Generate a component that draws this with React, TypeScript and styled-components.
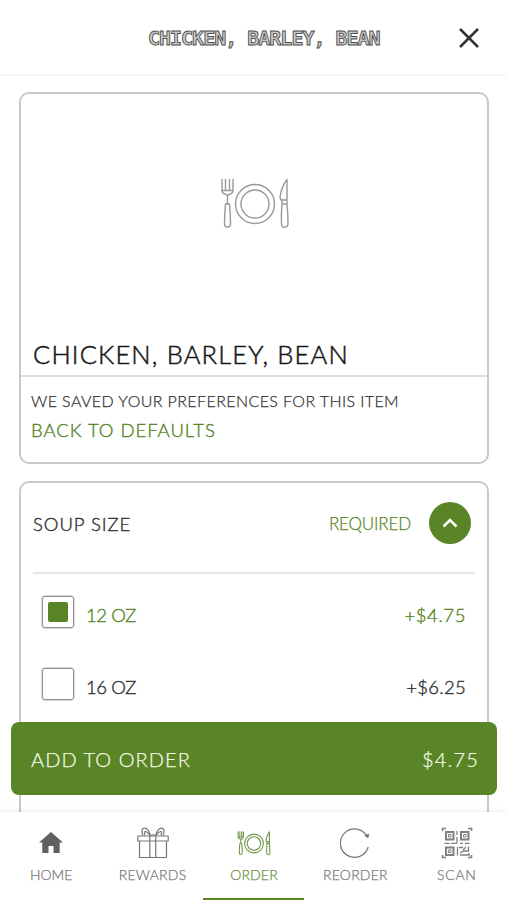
import React from 'react';
import styled, { createGlobalStyle } from 'styled-components';

const green = '#598527';

const GlobalStyle = createGlobalStyle`
  * { box-sizing: border-box; }
  body { margin: 0; background: #fff; }
`;

const Screen = styled.div`
  position: relative;
  display: flex;
  flex-direction: column;
  width: 507px;
  height: 900px;
  overflow: hidden;
  background: #fff;
  font-family: Lato, "Open Sans", sans-serif;
  font-weight: 300;
`;

const Header = styled.header`
  display: grid;
  grid-template-columns: 1fr 76px;
  align-items: center;
  flex: none;
  height: 76px;
  border-bottom: 2px solid #f5f5f5;
`;

const HeaderTitle = styled.h1`
  margin: 1px 0 0 148px;
  font: bold 20px/24px "DejaVu Sans Mono", monospace;
  letter-spacing: -1.01px;
  white-space: nowrap;
  color: #c8c8c8;
  -webkit-text-stroke: 0.9px #505050;
`;

const CloseButton = styled.button`
  display: flex;
  justify-content: center;
  padding: 1px 0 0;
  border: 0;
  background: none;
`;

const Content = styled.main`
  display: flex;
  flex-direction: column;
  gap: 17px;
  flex: 1;
  min-height: 0;
  overflow: hidden;
  padding: 16px 18px 0 19px;
`;

const Card = styled.section<{ $height: number }>`
  flex: none;
  height: ${(p) => p.$height}px;
  border: 2px solid #c9c9c9;
  border-radius: 10px;
`;

const Text = styled.span<{ $size: number; $spacing?: number; $color?: string; $weight?: number }>`
  font-size: ${(p) => p.$size}px;
  line-height: 1.2;
  letter-spacing: ${(p) => p.$spacing ?? 0}px;
  color: ${(p) => p.$color ?? '#333'};
  -webkit-text-stroke: ${(p) => p.$weight ?? 0.25}px currentColor;
  white-space: nowrap;
`;

const Photo = styled.div`
  display: flex;
  justify-content: center;
  height: 243px;
  padding: 84px 0 0 1px;
`;

const ItemName = styled.div`
  display: flex;
  height: 40px;
  padding: 2px 0 0 12px;
  border-bottom: 2px solid #dedede;
`;

const Preferences = styled.div`
  display: flex;
  flex-direction: column;
  gap: 9px;
  padding: 14px 9px 0 10px;
`;

const OptionHeader = styled.div`
  display: flex;
  align-items: center;
  height: 91px;
  margin: 0 12px;
  padding: 0 4px 7px 0;
  border-bottom: 2px solid #e6e6e6;
`;

const Required = styled.div`
  display: flex;
  margin: 0 18px 0 auto;
`;

const Toggle = styled.button`
  display: flex;
  align-items: center;
  justify-content: center;
  width: 42px;
  height: 42px;
  margin-bottom: 2px;
  padding: 0;
  border: 0;
  border-radius: 50%;
  background: ${green};
`;

const Options = styled.div`
  padding-top: 2px;
`;

const OptionRow = styled.div`
  display: flex;
  align-items: center;
  height: 72px;
  padding: 0 21px 0 21px;
`;

const Checkbox = styled.span<{ $checked?: boolean }>`
  width: 32px;
  height: 32px;
  margin-right: 12px;
  border: 1.5px solid #929292;
  border-radius: 3px;
  display: flex;
  align-items: center;
  justify-content: center;
  box-shadow: 0 0 0 0.4px #aaa;
  &::after {
    content: "";
    width: 20px;
    height: 20px;
    border-radius: 2px;
    background: ${(p) => (p.$checked ? green : 'transparent')};
  }
`;

const OptionLabel = styled.div`
  display: flex;
  flex: 1;
  justify-content: space-between;
  padding-top: 6px;
`;

const AddBar = styled.button`
  position: absolute;
  left: 11px;
  right: 10px;
  top: 722px;
  height: 73px;
  display: flex;
  align-items: center;
  justify-content: space-between;
  padding: 1px 18px 0 20px;
  border: 0;
  border-radius: 8px;
  background: ${green};
  font-family: inherit;
  font-weight: 300;
`;

const Nav = styled.nav`
  position: relative;
  display: grid;
  grid-template-columns: repeat(5, 1fr);
  flex: none;
  height: 88px;
  background: #fff;
  box-shadow: 0 -1px 6px rgba(0, 0, 0, 0.08);
`;

const NavItem = styled.a<{ $active?: boolean }>`
  display: flex;
  flex-direction: column;
  align-items: center;
  padding-left: 1px;
  border-bottom: 2px solid ${(p) => (p.$active ? green : 'transparent')};
`;

const NavIcon = styled.span`
  display: flex;
  align-items: center;
  justify-content: center;
  height: 34px;
  margin: 14px 0 7px;
`;

function Tableware({ width, height, color, stroke }: { width: number; height: number; color: string; stroke: number }) {
  return (
    <svg width={width} height={height} viewBox="0 0 70 52" fill="none" stroke={color} strokeWidth={stroke} strokeLinejoin="round" strokeLinecap="round">
      <circle cx="35" cy="26" r="19.5" />
      <circle cx="35" cy="26" r="14" />
      <path d="M2 1.500v11q0 3 3 3.500l1.500 1h2l1.500-1q3-.5 3-3.500v-11M5.500 1.500v10M9.500 1.500v10M2 12.500h11M7.500 17v9M5.500 26h4q1 11 1 20a3 3 0 0 1-6 0q0-10 1-20Z" />
      <path d="M67 1.500q-6 8-7 18l1 2.500h6ZM62 22v4h5v-4M62 26h5q1 10 1 20a3 3 0 0 1-6.500 0q-.5-10 .5-20Z" />
    </svg>
  );
}

const HomeIcon = () => (
  <svg width="24" height="22" viewBox="0 0 24 22" fill="#606060">
    <path d="M12 0 0 10.500h3.300V21h6.200v-7h5v7h6.200V10.500H24Z" />
  </svg>
);

const GiftIcon = () => (
  <svg width="32" height="32" viewBox="0 0 32 32" fill="none" stroke="#777" strokeWidth="1.200" strokeLinejoin="round">
    <path d="M.8 9h30.400v5H.8ZM2.500 14v16.500h27V14M12.800 9v21.500M18.700 9v21.500" />
    <path d="M13.500 8.500C12 4 10 1 7.500 1.200 4.500 1.200 4.500 5 6 8.500M8 8.500c-.8-2.500-.7-4.500.8-4 1.200.4 2.700 2 4.200 4M14 8.500q2-1.500 4 0M18.500 8.500C20 4 22 1 24.500 1.200c3 0 3 4 1.500 7.500M24 8.500c.8-2.500.7-4.500-.8-4-1.200.4-2.700 2-4.200 4" />
  </svg>
);

const ReorderIcon = () => (
  <svg width="30" height="32" viewBox="0 0 30 32" fill="none" stroke="#777" strokeWidth="1.300">
    <path d="M28.200 20A14.200 14.200 0 1 1 26.800 9" />
    <path fill="#777" strokeWidth=".8" d="M24.800 8.500l3.200 2.300.900-3.700Z" />
  </svg>
);

const ScanIcon = () => (
  <svg width="32" height="32" viewBox="0 0 32 32" fill="none" stroke="#808080" strokeWidth="1.600">
    <path d="M1.500 4V1.500H5M27 1.500h3.500V4M1.500 28v2.500H5M27 30.500h3.500V28" />
    <path strokeWidth="2" d="M5 5h7.500v7.500H5ZM20 5h7.500v7.500H20ZM5 20.500h7.500V28H5Z" />
    <path strokeWidth="1" d="M7.500 7.500h2.500v2.500H7.500ZM22.500 7.500h2.500v2.500h-2.500ZM7.500 23h2.500v2.500H7.500Z" />
    <path strokeWidth="1.300" d="M16 4v4M16 10v6M3.500 16.300h5M10 16.300h6M19 16.300h3M24 16.300h4.500M16.500 20v8.500M18 20.500h4M27.500 19.500v4.500h-5l-3.500 2M19 28h9v-2M25 20l-3 3" />
  </svg>
);

const navItems = [
  { label: 'HOME', spacing: 0, icon: <HomeIcon /> },
  { label: 'REWARDS', spacing: 0.2, icon: <GiftIcon /> },
  { label: 'ORDER', spacing: 0.15, active: true, icon: <Tableware width={34} height={25} color="#72984a" stroke={2.3} /> },
  { label: 'REORDER', spacing: 0.2, icon: <ReorderIcon /> },
  { label: 'SCAN', spacing: 0.7, icon: <ScanIcon /> },
];

const options = [
  { label: '12 OZ', price: '+$4.75', spacing: 0.6, checked: true },
  { label: '16 OZ', price: '+$6.25', spacing: 0.3, checked: false },
];

export default function App() {
  return (
    <Screen>
      <GlobalStyle />
      <Header>
        <HeaderTitle>CHICKEN, BARLEY, BEAN</HeaderTitle>
        <CloseButton aria-label="Close">
          <svg width="20" height="20" viewBox="0 0 20 20" stroke="#333" strokeWidth="2.500">
            <path d="M1 1l18 18M19 1 1 19" />
          </svg>
        </CloseButton>
      </Header>
      <Content>
        <Card $height={372}>
          <Photo>
            <Tableware width={70} height={52} color="#999" stroke={1.4} />
          </Photo>
          <ItemName>
            <Text $size={25.5} $spacing={1.17} $color="#161616" $weight={0.5}>CHICKEN, BARLEY, BEAN</Text>
          </ItemName>
          <Preferences>
            <Text $size={16} $spacing={0.4}>WE SAVED YOUR PREFERENCES FOR THIS ITEM</Text>
            <Text $size={18.5} $spacing={0.97} $color={green} $weight={0.4}>BACK TO DEFAULTS</Text>
          </Preferences>
        </Card>
        <Card $height={420}>
          <OptionHeader>
            <Text $size={18.5} $spacing={0.95} $weight={0.4}>SOUP SIZE</Text>
            <Required>
              <Text $size={17} $spacing={-0.15} $color={green}>REQUIRED</Text>
            </Required>
            <Toggle aria-label="Collapse">
              <svg width="16" height="10" viewBox="0 0 16 10" fill="none" stroke="#fff" strokeWidth="2.600">
                <path d="M1.500 8.500 8 2l6.500 6.500" />
              </svg>
            </Toggle>
          </OptionHeader>
          <Options>
            {options.map((o) => (
              <OptionRow key={o.label}>
                <Checkbox $checked={o.checked} />
                <OptionLabel>
                  <Text $size={18.5} $spacing={-0.4} $color={o.checked ? green : '#333'} $weight={0.4}>{o.label}</Text>
                  <Text $size={18.5} $spacing={o.spacing} $color={o.checked ? green : '#333'} $weight={0.4}>{o.price}</Text>
                </OptionLabel>
              </OptionRow>
            ))}
          </Options>
        </Card>
      </Content>
      <AddBar>
        <Text $size={20} $spacing={1.05} $color="#f2fae8">ADD TO ORDER</Text>
        <Text $size={20} $spacing={1.2} $color="#f2fae8">$4.75</Text>
      </AddBar>
      <Nav>
        {navItems.map((n) => (
          <NavItem key={n.label} $active={n.active}>
            <NavIcon>{n.icon}</NavIcon>
            <Text $size={14} $spacing={n.spacing} $color={n.active ? '#689039' : '#777'}>{n.label}</Text>
          </NavItem>
        ))}
      </Nav>
    </Screen>
  );
}
